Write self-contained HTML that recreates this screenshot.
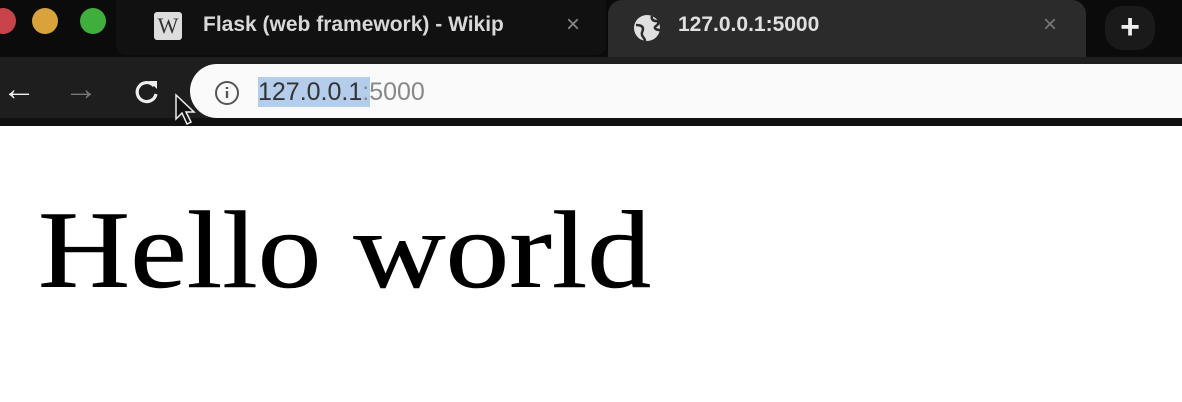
<!DOCTYPE html>
<html><head><style>
body{margin:0;width:1182px;height:402px;overflow:hidden;background:#fff;position:relative;font-family:"Liberation Sans",sans-serif}
.a{position:absolute}
</style></head><body>
<div class="a" style="left:0;top:0;width:1182px;height:57px;background:#0b0b0b"></div>
<div class="a" style="left:-10px;top:8px;width:26px;height:26px;border-radius:50%;background:#c9444a"></div>
<div class="a" style="left:32px;top:8px;width:26px;height:26px;border-radius:50%;background:#d9a23a"></div>
<div class="a" style="left:80px;top:8px;width:26px;height:26px;border-radius:50%;background:#3fae3c"></div>
<div class="a" style="left:116px;top:0;width:490px;height:55px;background:#111;border-radius:0 0 10px 10px"></div>
<div class="a" style="top:12px;width:28px;height:28px;background:#ddd;border-radius:3px;color:#333;font-family:'Liberation Serif',serif;font-size:22px;text-align:center;line-height:28px;left:154px">W</div>
<div class="a" style="left:203px;top:13px;font-size:21px;color:#d8d8d8;font-weight:bold">Flask (web framework) - Wikip</div>
<div class="a" style="left:566px;top:11px;font-size:24px;color:#888">×</div>
<div class="a" style="left:608px;top:0;width:478px;height:60px;background:#2b2b2b;border-radius:14px 14px 0 0"></div>
<svg class="a" style="left:632px;top:13px" width="30" height="30" viewBox="0 0 30 30"><circle cx="15" cy="15" r="13" fill="#e0e0e0"/><path d="M4 12c4 0 7 1 7 4s-2 3-1 6 3 3 3 6M20 3c-1 3 1 5 4 5s3 3 0 5 0 4 4 4" stroke="#2b2b2b" stroke-width="2.5" fill="none"/></svg>
<div class="a" style="left:678px;top:13px;font-size:21px;color:#e0e0e0;font-weight:bold">127.0.0.1:5000</div>
<div class="a" style="left:1043px;top:11px;font-size:24px;color:#777">×</div>
<div class="a" style="left:1105px;top:6px;width:50px;height:44px;border-radius:18px;background:#1a1a1a;color:#eee;font-size:34px;text-align:center;line-height:42px;font-weight:bold">+</div>
<div class="a" style="left:0;top:57px;width:1182px;height:68px;background:#1e1e1e"></div>
<div class="a" style="left:2px;top:70px;font-size:34px;color:#eee;font-weight:bold">←</div>
<div class="a" style="left:64px;top:70px;font-size:34px;color:#777;font-weight:bold">→</div>
<svg class="a" style="left:132px;top:77px" width="30" height="30" viewBox="0 0 30 30"><path d="M22 9A9.5 9.5 0 1 0 24 17" stroke="#eee" stroke-width="3.2" fill="none"/><path d="M17 4L25 4L25 12Z" fill="#eee"/></svg>
<div class="a" style="left:190px;top:64px;width:1000px;height:54px;background:#fafafa;border-radius:28px 0 0 28px"></div>
<div class="a" style="left:0;top:118px;width:1182px;height:8px;background:#111"></div>
<svg class="a" style="left:214px;top:80px" width="26" height="26" viewBox="0 0 26 26"><circle cx="13" cy="13" r="11" stroke="#555" stroke-width="2" fill="none"/><path d="M13 11v7M13 7v2" stroke="#555" stroke-width="2.4"/></svg>
<div class="a" style="left:258px;top:77px;height:30px;width:112px;background:#b4cdea"></div>
<div class="a" style="left:258px;top:77px;font-size:25px;color:#333;line-height:30px">127.0.0.1<span style="color:#888">:5000</span></div>
<svg class="a" style="left:174px;top:93px" width="22" height="34" viewBox="0 0 22 34"><path d="M2 2L2 26L8 20L13 31L17 29L12 19L20 19Z" fill="#111" stroke="#eee" stroke-width="1.5"/></svg>
<div class="a" style="left:38px;top:195px;font-family:'Liberation Serif',serif;font-size:110px;color:#000;line-height:110px;transform:scaleX(1.16);transform-origin:0 0;white-space:nowrap;-webkit-text-stroke:0.6px #000">Hello world</div>
</body></html>
